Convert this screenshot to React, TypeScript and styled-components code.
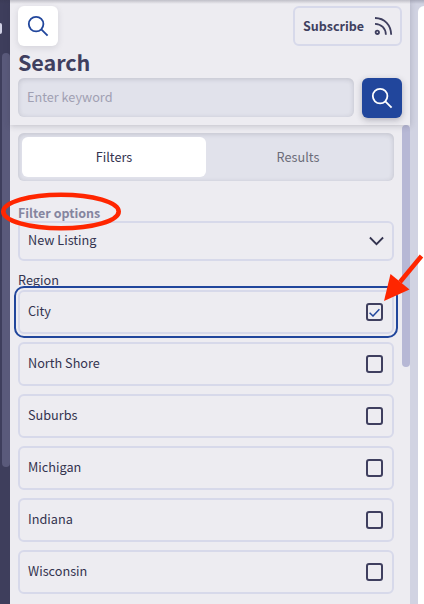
import React from "react";
import styled, { createGlobalStyle } from "styled-components";

const ink = "#3f3f5f";
const blue = "#21469c";
const line = "#d7d9ea";
const panel = "#edecf1";
const well = "#e1e2eb";

const GlobalStyle = createGlobalStyle`
  *, *::before, *::after { box-sizing: border-box; }
  html, body { margin: 0; padding: 0; overflow: hidden; }
  body { font-family: "Noto Sans CJK SC", "Noto Sans", sans-serif; color: ${ink}; }
  button, input { font: inherit; color: inherit; margin: 0; }
`;

const Screen = styled.div`
  position: relative;
  display: grid;
  grid-template-columns: 10px 400px 1fr;
  width: 424px;
  height: 604px;
  overflow: hidden;
  background: #d1d3e2;
`;

const NavEdge = styled.div`
  background: #3e3e5c;
  padding: 23px 0 0;
`;

const NavBadge = styled.div`
  width: 2px;
  height: 11px;
  background: #d2d3e6;
  border-radius: 0 2px 2px 0;
`;

const NavThumb = styled.div`
  width: 8px;
  height: 414px;
  margin: 19px 0 0 2px;
  border-radius: 4px;
  background: #5a5a7b;
`;

const Panel = styled.main`
  display: flex;
  flex-direction: column;
  height: 604px;
  background: ${panel};
`;

const Header = styled.header`
  flex: none;
  height: 125px;
  padding: 6px 8px 0;
  background: ${panel};
  box-shadow: 0 1px 6px rgba(50, 50, 70, 0.24);
  z-index: 1;
`;

const Row = styled.div`
  display: flex;
  justify-content: space-between;
`;

const IconButton = styled.button<{ $solid?: boolean }>`
  display: grid;
  place-items: center;
  width: 40px;
  height: 40px;
  padding: 0;
  border: 0;
  border-radius: 6px;
  color: ${(p) => (p.$solid ? "#fff" : blue)};
  background: ${(p) => (p.$solid ? blue : "#fff")};
  box-shadow: ${(p) => (p.$solid ? "0 2px 6px rgba(50, 50, 70, 0.32)" : "0 2px 6px rgba(50, 50, 70, 0.13)")};
`;

const Subscribe = styled.button`
  display: flex;
  align-items: center;
  justify-content: space-between;
  width: 109px;
  height: 40px;
  padding: 0 7px 0 8px;
  border: 2px solid ${line};
  border-radius: 6px;
  background: transparent;
  font-size: 12.5px;
  line-height: 20px;
  font-weight: 700;
`;

const Title = styled.h1`
  margin: 0;
  height: 32px;
  font-size: 21.6px;
  letter-spacing: -0.1px;
  line-height: 32px;
  font-weight: 700;
`;

const Keyword = styled.input`
  width: 336px;
  height: 39px;
  padding: 0 9px 2px;
  border: 0;
  border-radius: 6px;
  background: ${well};
  box-shadow: inset 0 1px 5px rgba(50, 50, 70, 0.19);
  font-size: 12.7px;
  outline: 0;
  &::placeholder { color: #a0a0b2; opacity: 1; }
`;

const Body = styled.section`
  display: flex;
  justify-content: space-between;
  height: 479px;
  padding-left: 8px;
`;

const Content = styled.div`
  width: 376px;
  padding-top: 8px;
`;

const Thumb = styled.div`
  width: 8px;
  height: 242px;
  border-radius: 4px;
  background: #b7b8d5;
`;

const Tabs = styled.div`
  display: grid;
  grid-template-columns: 1fr 1fr;
  height: 48px;
  padding: 4px;
  border-radius: 6px;
  background: ${well};
  box-shadow: inset 0 1px 5px rgba(50, 50, 70, 0.19);
`;

const Tab = styled.button<{ $active?: boolean }>`
  padding: 0;
  border: 0;
  border-radius: 6px;
  background: ${(p) => (p.$active ? "#fff" : "transparent")};
  color: ${(p) => (p.$active ? "#33334f" : "#6c6c79")};
  font-size: 12.7px;
  line-height: 40px;
`;

const GroupTitle = styled.div`
  margin-top: 23px;
  height: 17px;
  font-size: 12.5px;
  line-height: 18px;
  font-weight: 700;
  color: #85859f;
`;

const Select = styled.button`
  display: flex;
  align-items: center;
  justify-content: space-between;
  width: 376px;
  height: 40px;
  padding: 0 7px 1px 8px;
  border: 2px solid ${line};
  border-radius: 6px;
  background: transparent;
  font-size: 12.7px;
  line-height: 20px;
  color: #33334f;
`;

const SelectText = styled.span`
  margin-top: -2px;
`;

const Label = styled.div`
  height: 29px;
  padding-top: 9px;
  font-size: 12.7px;
  line-height: 20px;
  color: #33334f;
`;

const Options = styled.div`
  display: flex;
  flex-direction: column;
  gap: 8px;
`;

const Option = styled.label<{ $focused?: boolean }>`
  display: flex;
  align-items: center;
  justify-content: space-between;
  height: 44px;
  padding: 0 9px 0 8px;
  border: 2px solid ${line};
  border-radius: 6px;
  outline: ${(p) => (p.$focused ? `2px solid ${blue}` : "none")};
  outline-offset: 2px;
  font-size: 12.7px;
  line-height: 20px;
  color: #33334f;
`;

const OptionText = styled.span`
  padding-bottom: 2px;
`;

const Box = styled.span`
  display: grid;
  place-items: center;
  width: 17px;
  height: 18px;
  padding-top: 1px;
  border: 2px solid ${ink};
  border-radius: 3px;
`;

const NextPanel = styled.div`
  margin: 6px 0 0 8px;
  height: 598px;
  border-radius: 6px 0 0 0;
  background: #fff;
`;

const TopShade = styled.div`
  position: absolute;
  inset: 0 0 auto 0;
  height: 4px;
  z-index: 2;
  background: linear-gradient(rgba(50, 50, 70, 0.24), rgba(50, 50, 70, 0));
`;

const Annotation = styled.svg`
  position: absolute;
  inset: 0;
  z-index: 3;
  pointer-events: none;
`;

const SearchIcon = () => (
  <svg width="22" height="22" viewBox="0 0 22 22" fill="none" stroke="currentColor" strokeWidth="1.8">
    <circle cx="9.1" cy="9.1" r="7.3" />
    <path d="M14.3 14.3L20.6 20.6" />
  </svg>
);

const FeedIcon = () => (
  <svg width="20" height="20" viewBox="0 0 20 20" fill="none" stroke="currentColor" strokeWidth="1.8">
    <circle cx="4.3" cy="16.3" r="1.7" />
    <path d="M2 7.8C8.4 8 12.7 12.4 12.9 18.7" />
    <path d="M2 2C11.8 2.2 18 9 18.2 18.7" />
  </svg>
);

const OPTIONS = ["City", "North Shore", "Suburbs", "Michigan", "Indiana", "Wisconsin"];

export default function App() {
  return (
    <>
      <GlobalStyle />
      <Screen>
        <NavEdge>
          <NavBadge />
          <NavThumb />
        </NavEdge>
        <Panel>
          <Header>
            <Row>
              <IconButton aria-label="Search"><SearchIcon /></IconButton>
              <Subscribe>Subscribe<FeedIcon /></Subscribe>
            </Row>
            <Title>Search</Title>
            <Row>
              <Keyword placeholder="Enter keyword" />
              <IconButton $solid aria-label="Submit search"><SearchIcon /></IconButton>
            </Row>
          </Header>
          <Body>
            <Content>
              <Tabs>
                <Tab $active>Filters</Tab>
                <Tab>Results</Tab>
              </Tabs>
              <GroupTitle>Filter options</GroupTitle>
              <Select>
                <SelectText>New Listing</SelectText>
                <svg width="16" height="10" viewBox="0 0 16 10" fill="none" stroke="currentColor" strokeWidth="1.8">
                  <path d="M0.9 1.5L7.5 8.2L14.1 1.5" />
                </svg>
              </Select>
              <Label>Region</Label>
              <Options>
                {OPTIONS.map((name, i) => (
                  <Option key={name} $focused={i === 0}>
                    <OptionText>{name}</OptionText>
                    <Box>
                      {i === 0 && (
                        <svg width="11" height="9" viewBox="0 0 11 9" fill="none" stroke={blue} strokeWidth="1.5">
                          <path d="M0.6 4.7L4 8L10.4 1.2" />
                        </svg>
                      )}
                    </Box>
                  </Option>
                ))}
              </Options>
            </Content>
            <Thumb />
          </Body>
        </Panel>
        <NextPanel />
        <TopShade />
        <Annotation width="424" height="604" viewBox="0 0 424 604">
          <ellipse cx="61" cy="211.5" rx="57.7" ry="16.8" fill="none" stroke="#ff2600" strokeWidth="4.6" />
          <path d="M421.5 256L400 282" stroke="#ff2600" strokeWidth="4.5" />
          <path d="M384 301L390.5 274L409.5 289.5Z" fill="#ff2600" />
        </Annotation>
      </Screen>
    </>
  );
}
